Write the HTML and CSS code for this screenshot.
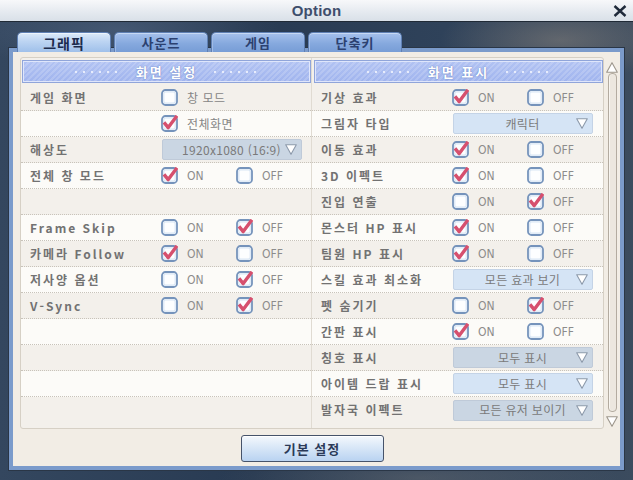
FILE: index.html
```html
<!DOCTYPE html>
<html lang="ko">
<head>
<meta charset="utf-8">
<title>Option</title>
<link rel="stylesheet" href="styles.css">
</head>
<body>
<svg class="defs" width="0" height="0" aria-hidden="true">
  <symbol id="cb" viewBox="0 0 17 17">
    <rect x="1" y="1" width="15" height="15" rx="3.5" fill="#fdfeff" stroke="#7593bb" stroke-width="1.8"/>
    <rect x="2.8" y="2.8" width="11.4" height="11.4" rx="2" fill="none" stroke="#d9e6f5" stroke-width="1.2"/>
  </symbol>
  <symbol id="cbon" viewBox="0 0 17 17">
    <rect x="1" y="1" width="15" height="15" rx="3.5" fill="#fdfeff" stroke="#7593bb" stroke-width="1.8"/>
    <rect x="2.8" y="2.8" width="11.4" height="11.4" rx="2" fill="none" stroke="#d9e6f5" stroke-width="1.2"/>
    <path d="M3 7.4 L7.2 12.6 L16 0.8" fill="none" stroke="#d6506e" stroke-width="3.4" stroke-linejoin="round"/>
  </symbol>
  <symbol id="dd" viewBox="0 0 12 11">
    <polygon points="0.7,0.7 11.3,0.7 6,10.3" fill="#ffffff" stroke="#8d9aab" stroke-width="1.1" stroke-linejoin="round"/>
  </symbol>
</svg>
<div class="app">
  <header class="titlebar">
    <span></span>
    <span class="title">Option</span>
    <svg class="close" width="14" height="12" viewBox="0 0 14 12"><path d="M1.5 1 L12.5 11 M12.5 1 L1.5 11" stroke="#1f2a3a" stroke-width="2.4"/></svg>
  </header>
  <div class="window">
    <nav class="tabs">
      <div class="tab active">그래픽</div>
      <div class="tab">사운드</div>
      <div class="tab">게임</div>
      <div class="tab">단축키</div>
    </nav>
    <div class="frame">
      <div class="panel">
        <div class="box">
          <div class="col col-left">
            <div class="sec"><span class="dots"></span><span class="sec-title">화면 설정</span><span class="dots"></span></div>
            <div class="row"><span class="lbl">게임 화면</span><span class="opt wide"><svg class="chk"><use href="#cb"/></svg><span class="ko">창 모드</span></span></div>
            <div class="row"><span class="lbl"></span><span class="opt wide"><svg class="chk"><use href="#cbon"/></svg><span class="ko">전체화면</span></span></div>
            <div class="row"><span class="lbl">해상도</span><span class="select"><span class="sel-text">1920x1080 (16:9)</span><svg class="arrow"><use href="#dd"/></svg></span></div>
            <div class="row"><span class="lbl">전체 창 모드</span><span class="opt"><svg class="chk"><use href="#cbon"/></svg><span class="en">ON</span></span><span class="opt"><svg class="chk"><use href="#cb"/></svg><span class="en">OFF</span></span></div>
            <div class="row"></div>
            <div class="row"><span class="lbl">Frame Skip</span><span class="opt"><svg class="chk"><use href="#cb"/></svg><span class="en">ON</span></span><span class="opt"><svg class="chk"><use href="#cbon"/></svg><span class="en">OFF</span></span></div>
            <div class="row"><span class="lbl">카메라 Follow</span><span class="opt"><svg class="chk"><use href="#cbon"/></svg><span class="en">ON</span></span><span class="opt"><svg class="chk"><use href="#cb"/></svg><span class="en">OFF</span></span></div>
            <div class="row"><span class="lbl">저사양 옵션</span><span class="opt"><svg class="chk"><use href="#cb"/></svg><span class="en">ON</span></span><span class="opt"><svg class="chk"><use href="#cbon"/></svg><span class="en">OFF</span></span></div>
            <div class="row"><span class="lbl">V-Sync</span><span class="opt"><svg class="chk"><use href="#cb"/></svg><span class="en">ON</span></span><span class="opt"><svg class="chk"><use href="#cbon"/></svg><span class="en">OFF</span></span></div>
            <div class="row"></div>
            <div class="row"></div>
            <div class="row"></div>
            <div class="row"></div>
          </div>
          <div class="col col-right">
            <div class="sec"><span class="dots"></span><span class="sec-title">화면 표시</span><span class="dots"></span></div>
            <div class="row"><span class="lbl">기상 효과</span><span class="opt"><svg class="chk"><use href="#cbon"/></svg><span class="en">ON</span></span><span class="opt"><svg class="chk"><use href="#cb"/></svg><span class="en">OFF</span></span></div>
            <div class="row"><span class="lbl">그림자 타입</span><span class="select"><span class="sel-text">캐릭터</span><svg class="arrow"><use href="#dd"/></svg></span></div>
            <div class="row"><span class="lbl">이동 효과</span><span class="opt"><svg class="chk"><use href="#cbon"/></svg><span class="en">ON</span></span><span class="opt"><svg class="chk"><use href="#cb"/></svg><span class="en">OFF</span></span></div>
            <div class="row"><span class="lbl">3D 이펙트</span><span class="opt"><svg class="chk"><use href="#cbon"/></svg><span class="en">ON</span></span><span class="opt"><svg class="chk"><use href="#cb"/></svg><span class="en">OFF</span></span></div>
            <div class="row"><span class="lbl">진입 연출</span><span class="opt"><svg class="chk"><use href="#cb"/></svg><span class="en">ON</span></span><span class="opt"><svg class="chk"><use href="#cbon"/></svg><span class="en">OFF</span></span></div>
            <div class="row"><span class="lbl">몬스터 HP 표시</span><span class="opt"><svg class="chk"><use href="#cbon"/></svg><span class="en">ON</span></span><span class="opt"><svg class="chk"><use href="#cb"/></svg><span class="en">OFF</span></span></div>
            <div class="row"><span class="lbl">팀원 HP 표시</span><span class="opt"><svg class="chk"><use href="#cbon"/></svg><span class="en">ON</span></span><span class="opt"><svg class="chk"><use href="#cb"/></svg><span class="en">OFF</span></span></div>
            <div class="row"><span class="lbl">스킬 효과 최소화</span><span class="select"><span class="sel-text">모든 효과 보기</span><svg class="arrow"><use href="#dd"/></svg></span></div>
            <div class="row"><span class="lbl">펫 숨기기</span><span class="opt"><svg class="chk"><use href="#cb"/></svg><span class="en">ON</span></span><span class="opt"><svg class="chk"><use href="#cbon"/></svg><span class="en">OFF</span></span></div>
            <div class="row"><span class="lbl">간판 표시</span><span class="opt"><svg class="chk"><use href="#cbon"/></svg><span class="en">ON</span></span><span class="opt"><svg class="chk"><use href="#cb"/></svg><span class="en">OFF</span></span></div>
            <div class="row"><span class="lbl">칭호 표시</span><span class="select"><span class="sel-text">모두 표시</span><svg class="arrow"><use href="#dd"/></svg></span></div>
            <div class="row"><span class="lbl">아이템 드랍 표시</span><span class="select"><span class="sel-text">모두 표시</span><svg class="arrow"><use href="#dd"/></svg></span></div>
            <div class="row"><span class="lbl">발자국 이펙트</span><span class="select"><span class="sel-text">모든 유저 보이기</span><svg class="arrow"><use href="#dd"/></svg></span></div>
          </div>
        </div>
        <div class="scroll">
          <svg class="sarrow" viewBox="0 0 12 11"><polygon points="6,0.7 11.3,10.3 0.7,10.3" fill="#ffffff" stroke="#9d968c" stroke-width="1.1" stroke-linejoin="round"/></svg>
          <div class="track"></div>
          <svg class="sarrow" viewBox="0 0 12 11"><polygon points="0.7,0.7 11.3,0.7 6,10.3" fill="#ffffff" stroke="#9d968c" stroke-width="1.1" stroke-linejoin="round"/></svg>
        </div>
        <div class="footer"><button class="btn">기본 설정</button></div>
      </div>
    </div>
  </div>
</div>
</body>
</html>
```
FILE: styles.css
```css
* { box-sizing: border-box; }
html, body { margin: 0; padding: 0; }
body {
  width: 633px;
  height: 480px;
  overflow: hidden;
  font-family: "Noto Sans CJK KR", "Noto Sans", sans-serif;
  background: #2b3b50;
}
.defs { display: block; width: 0; height: 0; overflow: hidden; }

.app {
  width: 633px;
  height: 480px;
  display: flex;
  flex-direction: column;
  background:
    radial-gradient(ellipse 120px 40px at 560px 40px, rgba(150,140,130,0.45), transparent),
    radial-gradient(ellipse 160px 40px at 120px 30px, rgba(90,110,140,0.5), transparent),
    radial-gradient(ellipse 200px 30px at 420px 478px, rgba(120,120,120,0.4), transparent),
    linear-gradient(90deg, #34475f 0%, #283a52 40%, #2f425a 70%, #3b4b5e 100%);
}

/* title bar */
.titlebar {
  height: 22px;
  flex: none;
  display: grid;
  grid-template-columns: 1fr auto 1fr;
  align-items: center;
  background: linear-gradient(#f7f8fa, #e4e9ef 60%, #d9e0e8);
  border-bottom: 1px solid #202a36;
}
.title {
  font: bold 15px "Liberation Sans", Arial, sans-serif;
  color: #3e4e6c;
  letter-spacing: 0.2px;
}
.close { justify-self: end; margin-right: 6px; display: block; }

/* window */
.window {
  margin: 10px 0 0 8px;
  width: 617px;
  display: flex;
  flex-direction: column;
}
.tabs {
  display: flex;
  gap: 3px;
  padding-left: 9px;
  height: 20px;
  margin-bottom: -5px;
  position: relative;
  z-index: 1;
}
.tab {
  width: 94px;
  height: 20px;
  border: 1px solid #5f80b4;
  border-bottom: none;
  border-radius: 5px 5px 0 0;
  background: linear-gradient(#a6c1ec, #86a9de 55%, #779dd6);
  box-shadow: inset 0 1px 0 #c7d9f4, inset 1px 0 0 #9fbbe6;
  color: #2c4170;
  font-weight: bold;
  font-size: 13px;
  letter-spacing: 1px;
  display: flex;
  align-items: center;
  justify-content: center;
  line-height: 1;
}
.tab.active {
  background: linear-gradient(#dceaf9, #bcd4f2 45%, #9fc0ea);
  box-shadow: inset 0 1px 0 #eef5fd;
  color: #1c2b4c;
  font-size: 14px;
}

.frame {
  height: 424px;
  background: #7b9bcb;
  border: 1px solid #2a3646;
  padding: 4px;
}
.panel {
  height: 100%;
  background: #f2ede5;
  padding: 5px 2px 4px 7px;
  display: grid;
  grid-template-columns: 584px 12px;
  grid-template-rows: 372px 27px;
  column-gap: 2px;
  row-gap: 6px;
}

/* content box */
.box {
  border: 1px solid #d6d0c5;
  border-radius: 3px;
  background: #f3f0eb;
  display: grid;
  grid-template-columns: 291px 291px;
  overflow: hidden;
}
.col { padding-top: 2px; display: flex; flex-direction: column; }
.col-left { border-right: 1px solid #e0dbd2; }
.col-left .sec { margin-left: 1px; }
.col-right .sec { margin-left: 2px; }

.sec {
  height: 23px;
  margin-bottom: 2px;
  flex: none;
  border: 1px solid #90a5da;
  box-shadow: inset 0 0 0 1px #dfe6fb;
  background:
    repeating-linear-gradient(135deg, rgba(255,255,255,0.16) 0 2px, rgba(255,255,255,0) 2px 4px),
    linear-gradient(#b2c3f3, #a0b4ee);
  display: flex;
  align-items: center;
  justify-content: center;
  gap: 16px;
}
.sec-title {
  color: #ffffff;
  font-weight: bold;
  font-size: 13px;
  letter-spacing: 2px;
  text-shadow: 0 0 1px #6b80c0, 0 0 2px #8097d6;
  line-height: 1;
}
.dots {
  width: 46px;
  height: 4px;
  background: radial-gradient(circle at 2px 2px, #e7ecfc 1.1px, rgba(255,255,255,0) 1.6px) 0 0 / 8px 4px repeat-x;
}

.row {
  height: 26px;
  flex: none;
  border-bottom: 1px dotted #c8c3ba;
  display: grid;
  grid-template-columns: 131px 75px 75px;
  align-items: center;
  padding-left: 9px;
}
.row:nth-of-type(odd) { background: #fcfbf8; }
.row:last-child { border-bottom: none; }

.lbl {
  color: #727272;
  font-weight: bold;
  font-size: 12px;
  letter-spacing: 2px;
  white-space: nowrap;
  line-height: 1;
}
.opt {
  display: flex;
  align-items: center;
  gap: 9px;
}
.opt.wide { grid-column: 2 / 4; }
.chk { width: 17px; height: 17px; display: block; flex: none; }
.en {
  font-family: "DejaVu Sans Condensed", "Liberation Sans Narrow", "DejaVu Sans", sans-serif;
  font-stretch: condensed;
  font-size: 12px;
  color: #8c8c8c;
  line-height: 1;
}
.ko {
  font-size: 12px;
  color: #858585;
  line-height: 1;
  letter-spacing: 0.5px;
}

.select {
  grid-column: 2 / 4;
  margin-left: 1px;
  width: 140px;
  height: 21px;
  border: 1px solid #bfcad8;
  border-radius: 2px;
  background: #cad6e3;
  display: flex;
  align-items: center;
  padding: 0 4px 0 15px;
}
.row:nth-of-type(odd) .select { background: #d5e4f5; border-color: #c4d3e6; }
.sel-text {
  flex: 1;
  text-align: center;
  font-size: 12px;
  color: #7a7a7a;
  line-height: 1;
  white-space: nowrap;
  letter-spacing: 0.3px;
}
.arrow { width: 12px; height: 11px; display: block; flex: none; }

/* scrollbar */
.scroll {
  display: flex;
  flex-direction: column;
  align-items: center;
  padding: 5px 0 2px;
}
.sarrow { width: 12px; height: 11px; display: block; flex: none; }
.track {
  flex: 1;
  width: 9px;
  margin: 0 0 4px;
  border: 1px solid #b3aba0;
  border-radius: 4px;
  background: #ece7df;
  box-shadow: inset 1px 0 0 #f8f5f0;
}

/* footer */
.footer {
  grid-column: 1;
  display: flex;
  justify-content: center;
}
.btn {
  width: 143px;
  height: 27px;
  border: 1px solid #46536a;
  border-radius: 3px;
  background: linear-gradient(#f5f8fd 0%, #dce9f8 40%, #b9d3f1 100%);
  box-shadow: inset 0 1px 0 #ffffff;
  font-family: "Noto Sans CJK KR", sans-serif;
  font-weight: bold;
  font-size: 13px;
  letter-spacing: 1px;
  color: #2b3a58;
  padding: 0;
  line-height: 1;
}
```
